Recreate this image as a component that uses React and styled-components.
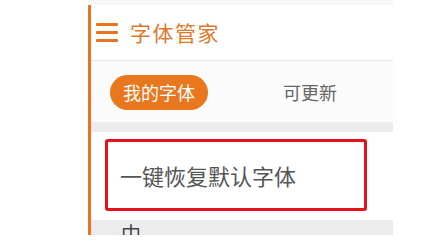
import React from 'react'
import styled, { createGlobalStyle } from 'styled-components'

const Global = createGlobalStyle`
  html, body {
    margin: 0;
    padding: 0;
    background: #ffffff;
    font-family: "Noto Sans CJK SC", "Noto Sans", sans-serif;
  }
`

const Page = styled.div`
  width: 439px;
  height: 249px;
  overflow: hidden;
  padding-left: 88px;
  box-sizing: border-box;
`

const Phone = styled.div`
  width: 305px;
  display: flex;
  flex-direction: column;
`

const TopStrip = styled.div`
  height: 5px;
  background: #f6f6f6;
`

const Screen = styled.div`
  border-left: 3px solid #e8741f;
  height: 230px;
  overflow: hidden;
  display: flex;
  flex-direction: column;
`

const Header = styled.div`
  height: 55px;
  flex-shrink: 0;
  display: flex;
  align-items: center;
  gap: 12px;
  padding-left: 5px;
  background: #ffffff;
  border-bottom: 1px solid #e8e8e8;
`

const Burger = styled.div`
  width: 22px;
  display: flex;
  flex-direction: column;
  gap: 5px;
  margin-top: -1px;

  span {
    display: block;
    height: 3px;
    border-radius: 1px;
    background: #e8741f;
  }
`

const Title = styled.div`
  font-size: 21px;
  color: #e0782a;
  letter-spacing: 1.5px;
  line-height: 1;
`

const Tabs = styled.div`
  height: 61px;
  flex-shrink: 0;
  display: flex;
  align-items: center;
  padding-left: 19px;
  background: #fbfbfb;
`

const Tab = styled.div`
  height: 35px;
  padding: 0 ${p => (p.$active ? '13px' : '0')};
  margin-right: ${p => (p.$active ? '75px' : '0')};
  border-radius: 18px;
  display: flex;
  align-items: center;
  font-size: 18px;
  color: ${p => (p.$active ? '#ffffff' : '#666666')};
  background: ${p => (p.$active ? '#e8771d' : 'transparent')};
  margin-top: 1px;
`

const Band = styled.div`
  height: ${p => p.$h}px;
  flex-shrink: 0;
  background: #ececec;
  padding-left: 30px;
  font-size: 20px;
  line-height: 1;
  color: #444;
  overflow: hidden;
`

const Section = styled.div`
  height: 88px;
  flex-shrink: 0;
  background: #ffffff;
  padding: 7px 0 0 14px;
  box-sizing: border-box;
`

const Highlight = styled.div`
  width: 262px;
  height: 72px;
  box-sizing: border-box;
  border: 3px solid #e8101a;
  border-radius: 3px;
  display: flex;
  align-items: center;
  padding-left: 12px;
  font-size: 22px;
  color: #555555;
`

export default function App() {
  return (
    <Page>
      <Global />
      <Phone>
        <TopStrip />
        <Screen>
          <Header>
            <Burger>
              <span />
              <span />
              <span />
            </Burger>
            <Title>字体管家</Title>
          </Header>
          <Tabs>
            <Tab $active>我的字体</Tab>
            <Tab>可更新</Tab>
          </Tabs>
          <Band $h={10} />
          <Section>
            <Highlight>一键恢复默认字体</Highlight>
          </Section>
          <Band $h={20} style={{ paddingTop: 4 }}>中</Band>
        </Screen>
      </Phone>
    </Page>
  )
}
